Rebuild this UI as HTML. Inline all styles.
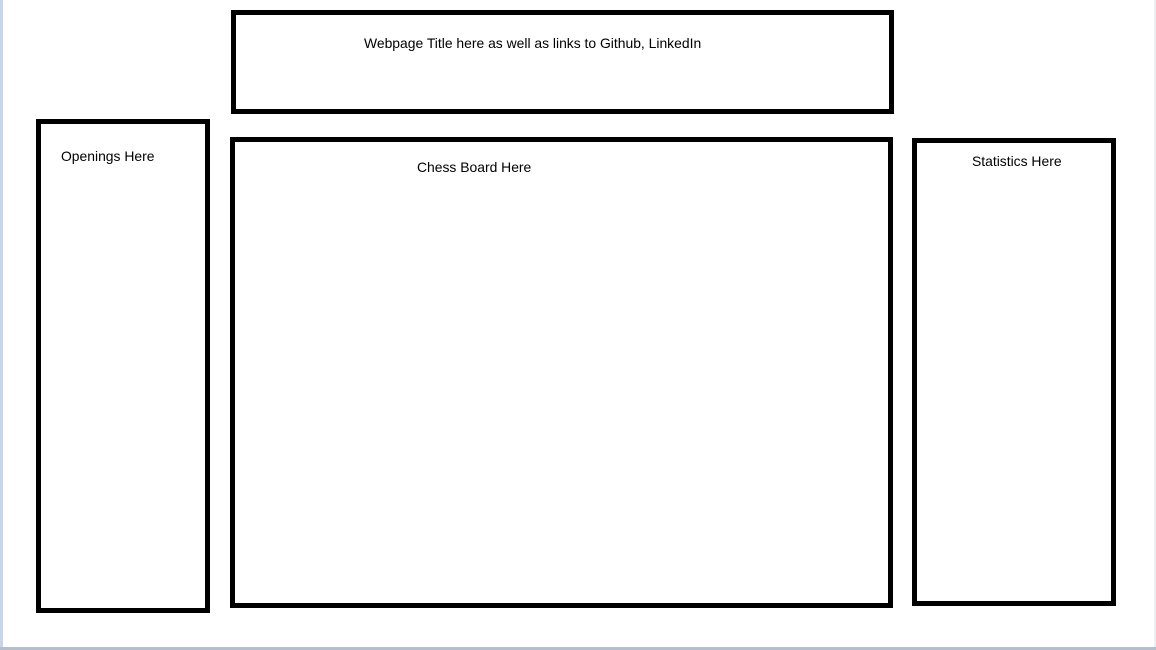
<!DOCTYPE html>
<html><head><style>
html,body{margin:0;padding:0;width:1156px;height:650px;background:#fff;overflow:hidden;position:relative;font-family:"Liberation Sans",sans-serif;font-size:13.9px;color:#000}
.b{position:absolute;border:5px solid #000;box-sizing:border-box}
.t{position:absolute;white-space:nowrap}
</style></head><body>
<div style="position:absolute;left:0;top:0;width:3px;height:650px;background:#c9d4e6"></div>
<div style="position:absolute;left:1154px;top:0;width:2px;height:650px;background:#eef0f4"></div>
<div style="position:absolute;left:0;top:647px;width:1156px;height:3px;background:#b4bfce"></div>
<div class="b" style="left:231px;top:10px;width:663px;height:104px"></div>
<div class="b" style="left:36px;top:119px;width:174px;height:494px"></div>
<div class="b" style="left:230px;top:137px;width:663px;height:471px"></div>
<div class="b" style="left:912px;top:138px;width:204px;height:468px"></div>
<div class="t" style="left:364px;top:35px">Webpage Title here as well as links to Github, LinkedIn</div>
<div class="t" style="left:61px;top:148px">Openings Here</div>
<div class="t" style="left:417px;top:159px">Chess Board Here</div>
<div class="t" style="left:972px;top:153px">Statistics Here</div>
</body></html>
